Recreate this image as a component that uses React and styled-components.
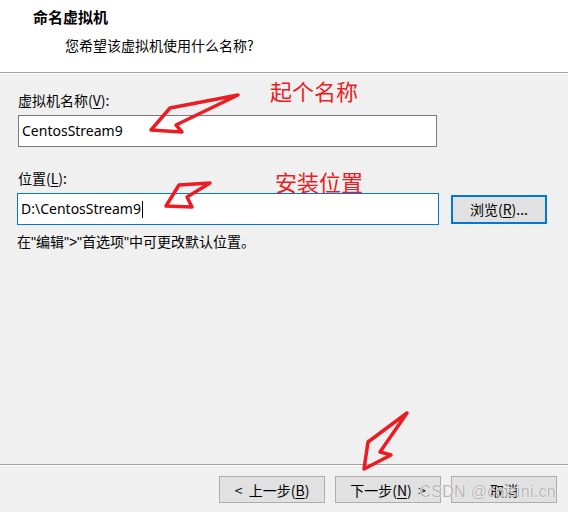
import React from "react";
import styled, { createGlobalStyle } from "styled-components";

const GlobalStyle = createGlobalStyle`
  html, body {
    margin: 0;
    padding: 0;
    background: #f0f0f0;
  }
  * {
    box-sizing: border-box;
  }
`;

const Window = styled.div`
  width: 568px;
  height: 512px;
  position: relative;
  display: flex;
  flex-direction: column;
  background: #f0f0f0;
  font-family: "Noto Sans CJK SC", "Noto Sans", sans-serif;
  color: #000;
  overflow: hidden;
`;

const Header = styled.header`
  height: 73px;
  background: #fff;
  border-bottom: 1px solid #a0a0a0;
  box-shadow: 0 1px 0 #fff;
  padding: 6px 0 0 33px;
`;

const Title = styled.h1`
  margin: 0;
  font-size: 15px;
  font-weight: 700;
  line-height: 22px;
`;

const Subtitle = styled.div`
  margin: 7px 0 0 32px;
  font-size: 14px;
  line-height: 20px;
`;

const Content = styled.main`
  flex: 1;
  padding: 17px 0 0 18px;
  display: flex;
  flex-direction: column;
`;

const Label = styled.label`
  font-size: 14px;
  line-height: 20px;
  margin-bottom: 5px;
  display: block;

  u {
    text-decoration: underline;
    text-underline-offset: 2px;
  }
`;

const Field = styled.div`
  width: ${(p) => p.$width}px;
  height: 32px;
  background: #fff;
  border: 1px solid ${(p) => (p.$focused ? "#0078d7" : "#7a7a7a")};
  font-family: "Noto Sans", "Noto Sans CJK SC", sans-serif;
  font-size: 14px;
  line-height: 30px;
  padding-left: 3px;
  display: flex;
  align-items: center;
`;

const Caret = styled.span`
  display: inline-block;
  width: 1px;
  height: 17px;
  background: #000;
  margin-left: 1px;
`;

const FieldRow = styled.div`
  display: flex;
  align-items: center;
  gap: 12px;
  margin-left: -1px;
`;

const Group = styled.div`
  margin-bottom: ${(p) => p.$gap || 0}px;
`;

const Hint = styled.div`
  font-family: "Liberation Sans", "Noto Sans CJK SC", sans-serif;
  font-size: 14px;
  line-height: 18px;
  margin-top: 8px;
  margin-left: -1px;
`;

const Button = styled.button`
  width: ${(p) => p.$width || 106}px;
  height: ${(p) => p.$height || 27}px;
  background: #e1e1e1;
  border: ${(p) => (p.$default ? "2px solid #0078d7" : "1px solid #adadad")};
  font-family: "Noto Sans CJK SC", "Noto Sans", sans-serif;
  font-size: 14px;
  color: #000;
  padding: 0;
  display: flex;
  align-items: center;
  justify-content: center;
  white-space: pre;

  u {
    text-decoration: underline;
    text-underline-offset: 2px;
  }
`;

const Footer = styled.footer`
  height: 48px;
  border-top: 1px solid #a0a0a0;
  box-shadow: inset 0 1px 0 #fff;
  display: flex;
  justify-content: flex-end;
  align-items: flex-start;
  gap: 10px;
  padding: 11px 11px 0 0;
`;

const Watermark = styled.div`
  position: absolute;
  right: 12px;
  bottom: 11px;
  font-family: "Liberation Sans", Arial, sans-serif;
  font-size: 16px;
  letter-spacing: 0.3px;
  color: #b4b4b4;
  text-shadow: 0 0 1px #fff, 0 0 1px #fff;
  pointer-events: none;
`;

const Overlay = styled.svg`
  position: absolute;
  left: 0;
  top: 0;
  pointer-events: none;
`;

const Note = styled.div`
  position: absolute;
  left: ${(p) => p.$x}px;
  top: ${(p) => p.$y}px;
  font-family: "Noto Sans CJK SC", sans-serif;
  font-size: 22px;
  line-height: 26px;
  color: #ec1c24;
  pointer-events: none;
`;

const arrows = [
  "M238 95 L170 108 L151 130 L182 132 L176 125 Z",
  "M210 183 L179 185 L166 206 L192 207 L187 197 Z",
  "M407 413 L368 442 L364 469 L391 455 L380 452 Z",
];

export default function App() {
  return (
    <>
      <GlobalStyle />
      <Window>
        <Header>
          <Title>命名虚拟机</Title>
          <Subtitle>您希望该虚拟机使用什么名称?</Subtitle>
        </Header>
        <Content>
          <Group $gap={21}>
            <Label>
              虚拟机名称(<u>V</u>):
            </Label>
            <Field $width={419}>CentosStream9</Field>
          </Group>
          <Group>
            <Label>
              位置(<u>L</u>):
            </Label>
            <FieldRow>
              <Field $width={422} $focused>
                D:\CentosStream9
                <Caret />
              </Field>
              <Button $default $width={96} $height={29}>
                浏览(<u>R</u>)...
              </Button>
            </FieldRow>
            <Hint>在"编辑"&gt;"首选项"中可更改默认位置。</Hint>
          </Group>
        </Content>
        <Footer>
          <Button>
            {"<  上一步("}<u>B</u>)
          </Button>
          <Button>
            下一步(<u>N</u>){"  >"}
          </Button>
          <Button>取消</Button>
        </Footer>
        <Watermark>CSDN @coisini.cn</Watermark>
        <Note $x={270} $y={77}>起个名称</Note>
        <Note $x={275} $y={168}>安装位置</Note>
        <Overlay width="568" height="512" viewBox="0 0 568 512">
          {arrows.map((d) => (
            <path
              key={d}
              d={d}
              fill="none"
              stroke="#ec1c24"
              strokeWidth="3.5"
              strokeLinejoin="round"
              strokeLinecap="round"
            />
          ))}
        </Overlay>
      </Window>
    </>
  );
}
